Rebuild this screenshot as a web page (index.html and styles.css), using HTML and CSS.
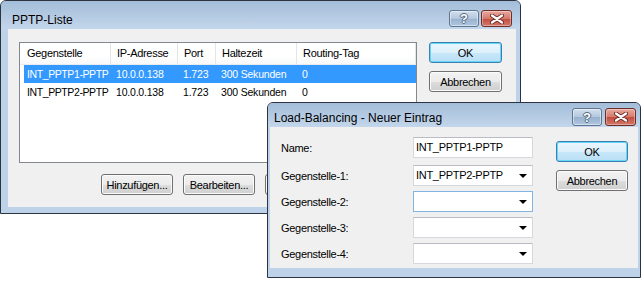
FILE: index.html
```html
<!DOCTYPE html>
<html lang="de">
<head>
  <meta charset="UTF-8">
  <title>PPTP-Liste</title>
  <link rel="stylesheet" href="styles.css">
</head>
<body>
  <div class="win list-win">
    <div class="titlebar">
      <span class="title">PPTP-Liste</span>
      <div class="caption-btns">
        <span class="cap-btn help">?</span>
        <span class="cap-btn close">
          <svg width="14" height="10" viewBox="0 0 14 10"><path d="M2 1.5 L12 8.5 M12 1.5 L2 8.5" stroke="#6b2a22" stroke-width="4" stroke-linecap="round"/><path d="M2 1.5 L12 8.5 M12 1.5 L2 8.5" stroke="#fff" stroke-width="2.2" stroke-linecap="round"/></svg>
        </span>
      </div>
    </div>
    <div class="client">
      <div class="top-row">
        <div class="listview">
          <div class="lv-head">
            <span>Gegenstelle</span>
            <span>IP-Adresse</span>
            <span>Port</span>
            <span>Haltezeit</span>
            <span>Routing-Tag</span>
          </div>
          <div class="lv-row selected">
            <span>INT_PPTP1-PPTP</span>
            <span>10.0.0.138</span>
            <span>1.723</span>
            <span>300 Sekunden</span>
            <span>0</span>
          </div>
          <div class="lv-row">
            <span>INT_PPTP2-PPTP</span>
            <span>10.0.0.138</span>
            <span>1.723</span>
            <span>300 Sekunden</span>
            <span>0</span>
          </div>
        </div>
        <div class="side-btns">
          <button class="btn default">OK</button>
          <button class="btn">Abbrechen</button>
        </div>
      </div>
      <div class="bottom-row">
        <button class="btn">Hinzufügen...</button>
        <button class="btn">Bearbeiten...</button>
        <!-- covered by the second dialog -->
        <button class="btn" aria-label="Kopieren"></button>
        <button class="btn" aria-label="Entfernen"></button>
      </div>
    </div>
  </div>

  <div class="win entry-win">
    <div class="titlebar">
      <span class="title">Load-Balancing - Neuer Eintrag</span>
      <div class="caption-btns">
        <span class="cap-btn help">?</span>
        <span class="cap-btn close">
          <svg width="14" height="10" viewBox="0 0 14 10"><path d="M2 1.5 L12 8.5 M12 1.5 L2 8.5" stroke="#6b2a22" stroke-width="4" stroke-linecap="round"/><path d="M2 1.5 L12 8.5 M12 1.5 L2 8.5" stroke="#fff" stroke-width="2.2" stroke-linecap="round"/></svg>
        </span>
      </div>
    </div>
    <div class="client">
      <div class="form">
        <div class="field first">
          <label>Name:</label>
          <div class="edit">INT_PPTP1-PPTP</div>
        </div>
        <div class="field">
          <label>Gegenstelle-1:</label>
          <div class="edit combo">INT_PPTP2-PPTP</div>
        </div>
        <div class="field">
          <label>Gegenstelle-2:</label>
          <div class="edit combo hot"></div>
        </div>
        <div class="field">
          <label>Gegenstelle-3:</label>
          <div class="edit combo"></div>
        </div>
        <div class="field">
          <label>Gegenstelle-4:</label>
          <div class="edit combo"></div>
        </div>
      </div>
      <div class="side-btns">
        <button class="btn default">OK</button>
        <button class="btn">Abbrechen</button>
      </div>
    </div>
  </div>
</body>
</html>
```

FILE: styles.css
```css
body {
  margin: 0;
  background: #fff;
  font-family: "Liberation Sans", Arial, sans-serif;
  font-size: 11px;
  color: #000;
}

.win {
  position: absolute;
  box-sizing: border-box;
  border: 1px solid #2b3440;
  border-radius: 6px 6px 0 0;
  background: #bed3ea;
  display: flex;
  flex-direction: column;
}
.list-win {
  left: 0;
  top: 0;
  width: 521px;
  height: 214px;
}
.entry-win {
  left: 267px;
  top: 102px;
  width: 374px;
  height: 176px;
  z-index: 2;
}

.titlebar {
  display: flex;
  align-items: flex-start;
  background: linear-gradient(#a3bdd9, #c3d6eb);
  border-radius: 5px 5px 0 0;
}
.list-win .titlebar {
  height: 28px;
  padding: 9px 8px 0 11px;
  box-sizing: border-box;
}
.entry-win .titlebar {
  height: 24px;
  padding: 5px 4px 0 6px;
  box-sizing: border-box;
}
.title {
  font-size: 12px;
  line-height: 16px;
  margin-top: 2px;
}

.caption-btns {
  margin-left: auto;
  display: flex;
  gap: 2px;
}
.cap-btn {
  width: 30px;
  height: 17px;
  box-sizing: border-box;
  border-radius: 3px;
  display: flex;
  align-items: center;
  justify-content: center;
}
.entry-win .cap-btn {
  height: 18px;
}
.entry-win .caption-btns {
  gap: 3px;
}
.help {
  border: 1px solid #5f7590;
  background: linear-gradient(#d3e0ee, #b3c7dc 50%, #98b1cd 51%, #aec6e0);
  box-shadow: inset 0 0 0 1px rgba(255,255,255,0.45);
  color: #fff;
  font-weight: bold;
  font-size: 13px;
  text-shadow: 0 0 1px #44566e, 1px 0 0 #5a6e88, -1px 0 0 #5a6e88, 0 1px 0 #5a6e88, 0 -1px 0 #5a6e88;
}
.close {
  width: 31px;
  border: 1px solid #6e2d26;
  background: linear-gradient(#e9a99f, #d47a6c 50%, #c14d3f 51%, #d2786a);
  box-shadow: inset 0 0 0 1px rgba(255,255,255,0.35);
}

.client {
  background: #f0f0f0;
  flex: 1;
}
.list-win .client {
  margin: 0 4px 6px 7px;
  padding: 13px 0 0 11px;
}
.entry-win .client {
  margin: 0 2px 9px 2px;
  padding: 10px 0 0 11px;
  display: flex;
  gap: 23px;
}

.top-row {
  display: flex;
  gap: 12px;
  align-items: flex-start;
}

.listview {
  width: 398px;
  height: 121px;
  box-sizing: border-box;
  border: 1px solid #828790;
  background: #fff;
}
.lv-head {
  display: grid;
  grid-template-columns: 91px 67px 38px 81px 119px;
  height: 22px;
  background: linear-gradient(#fff, #fff 60%, #f7f8f9);
  border-bottom: 1px solid #eaebec;
  box-sizing: border-box;
}
.lv-head span {
  border-right: 1px solid #e3e5e8;
  padding-left: 6px;
  line-height: 21px;
  letter-spacing: -0.3px;
}
.lv-head span:first-child {
  padding-left: 7px;
}
.lv-row {
  display: grid;
  grid-template-columns: 87px 67px 38px 81px 119px;
  margin-left: 4px;
  height: 18px;
  line-height: 18px;
  white-space: nowrap;
  font-size: 10.5px;
  letter-spacing: -0.2px;
}
.lv-row span {
  padding-left: 5px;
}
.lv-row span:first-child {
  padding-left: 3px;
  letter-spacing: -0.4px;
}
.lv-row.selected {
  background: #3399ff;
  color: #fff;
}

.side-btns {
  display: flex;
  flex-direction: column;
  gap: 8px;
}
.entry-win .side-btns {
  padding-top: 4px;
}

.btn {
  font-family: inherit;
  font-size: 11px;
  letter-spacing: -0.3px;
  width: 73px;
  height: 21px;
  padding: 0;
  color: #000;
  border: 1px solid #707070;
  border-radius: 3px;
  background: linear-gradient(#f2f2f2, #ebebeb 50%, #dddddd 51%, #cfcfcf);
  box-shadow: inset 0 0 0 1px #fbfbfb;
}
.btn.default {
  border-color: #3c7fb1;
  background: linear-gradient(#eaf6fd, #dcf0fb 50%, #c9e8fa 51%, #b9def4);
  box-shadow: inset 0 0 0 1px #66d6f8;
}
.entry-win .btn {
  width: 72px;
}

.bottom-row {
  display: flex;
  gap: 10px;
  margin-top: 11px;
  padding-left: 82px;
}
.bottom-row .btn {
  width: 72px;
}

.form {
  display: flex;
  flex-direction: column;
  gap: 5px;
}
.field {
  display: grid;
  grid-template-columns: 132px 120px;
  align-items: center;
  height: 21px;
}
.field.first {
  margin-bottom: 2px;
}
.field label {
  letter-spacing: -0.3px;
}
.edit {
  position: relative;
  height: 21px;
  box-sizing: border-box;
  border: 1px solid #d5d8dd;
  border-top-color: #b9bcc2;
  background: #fff;
  padding-left: 2px;
  line-height: 19px;
  letter-spacing: -0.3px;
}
.edit.hot {
  border-color: #82b4e4;
}
.combo::after {
  content: "";
  position: absolute;
  right: 5px;
  top: 8px;
  border-left: 4px solid transparent;
  border-right: 4px solid transparent;
  border-top: 4px solid #000;
}
```
